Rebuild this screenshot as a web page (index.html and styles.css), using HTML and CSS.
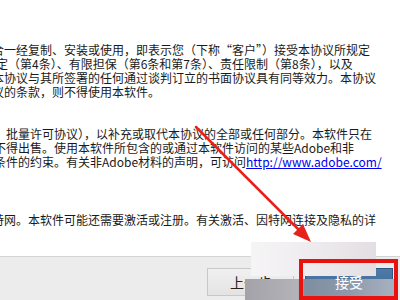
FILE: index.html
```html
<!DOCTYPE html>
<html lang="zh-CN">
<head>
<meta charset="utf-8">
<link rel="stylesheet" href="styles.css">
</head>
<body>
<div class="window">
  <div class="content">
    <div class="para p1">
      <div class="line">合一经复制、安装或使用，即表示您（下称“客户”）接受本协议所规定</div>
      <div class="line l2">定（第4条）、有限担保（第6条和第7条）、责任限制（第8条），以及</div>
      <div class="line">本协议与其所签署的任何通过谈判订立的书面协议具有同等效力。本协议</div>
      <div class="line">议的条款，则不得使用本软件。</div>
    </div>
    <div class="para p2">
      <div class="line l5">：批量许可协议），以补充或取代本协议的全部或任何部分。本软件只在</div>
      <div class="line l5">不得出售。使用本软件所包含的或通过本软件访问的某些Adobe和非</div>
      <div class="line l5">条件的约束。有关非Adobe材料的声明，可访问<a class="link" href="#">http://www.adobe.com/</a></div>
    </div>
    <div class="para p3">
      <div class="line">特网。本软件可能还需要激活或注册。有关激活、因特网连接及隐私的详</div>
    </div>
  </div>
  <div class="footer">
    <button class="btn btn-back">上一步</button>
    <button class="btn btn-accept">接受</button>
  </div>
</div>
<div class="mosaic mosaic-light"></div>
<div class="mosaic mosaic-strip"></div>
<div class="accept-label">接受</div>
<div class="highlight"></div>
<svg class="arrow" width="400" height="300" viewBox="0 0 400 300">
  <line x1="196" y1="127" x2="302" y2="233" stroke="#e5231c" stroke-width="2.5" stroke-linecap="round"/>
  <polygon points="311,242 293,234 303,224" fill="#e5231c"/>
</svg>
</body>
</html>
```

FILE: styles.css
```css
html, body {
  margin: 0;
  padding: 0;
}
body {
  width: 400px;
  height: 300px;
  overflow: hidden;
  position: relative;
  background: #ffffff;
  font-family: "Noto Sans CJK SC", "Microsoft YaHei", sans-serif;
}
.window {
  display: flex;
  flex-direction: column;
  height: 300px;
}
.content {
  height: 256px;
  box-sizing: border-box;
  padding-top: 43px;
  margin-left: -8px;
  color: #1a1a1a;
  font-size: 12px;
  line-height: 14px;
  overflow: hidden;
}
.line {
  white-space: nowrap;
  height: 14px;
}
.l2 {
  margin-left: 4px;
}
.l5 {
  margin-left: 2px;
}
.p2 {
  margin-top: 28px;
}
.p3 {
  margin-top: 44px;
}
.link {
  color: #0000ee;
  text-decoration: underline;
}
.footer {
  flex: 1;
  background: #ececec;
  border-top: 1px solid #d4d4d4;
  display: flex;
  align-items: flex-start;
  padding: 11px 0 0 207px;
  gap: 11px;
}
.btn {
  height: 28px;
  font-family: "Noto Sans CJK SC", sans-serif;
  font-size: 14px;
  padding: 0;
  box-sizing: border-box;
}
.btn-back {
  width: 87px;
  background: linear-gradient(#f0f0f0, #e3e3e3);
  border: 1px solid #c8c8c8;
  color: #222;
  text-align: left;
  padding-left: 22px;
}
.btn-accept {
  width: 88px;
  background: linear-gradient(#4f7aa6, #3a6796);
  border: 1px solid #2b5886;
  color: #ffffff;
}
.mosaic {
  position: absolute;
}
.mosaic-light {
  left: 251px;
  top: 242px;
  width: 125px;
  height: 34px;
  background: linear-gradient(to right, #f6f5f6, #ece9ec 60%, #e2dee3);
}
.mosaic-strip {
  left: 245px;
  top: 279px;
  width: 150px;
  height: 21px;
  background: linear-gradient(to right, #a3a2a9 0%, #b4b3b9 35%, #7f8da0 40%, #8e9aac 70%, #a8b1bf 100%);
}
.accept-label {
  position: absolute;
  left: 335px;
  top: 273px;
  color: #ffffff;
  font-size: 14px;
  line-height: 18px;
}
.highlight {
  position: absolute;
  left: 299px;
  top: 259px;
  width: 99px;
  height: 41px;
  box-sizing: border-box;
  border: 4px solid #e8130f;
}
.arrow {
  position: absolute;
  left: 0;
  top: 0;
}
```
